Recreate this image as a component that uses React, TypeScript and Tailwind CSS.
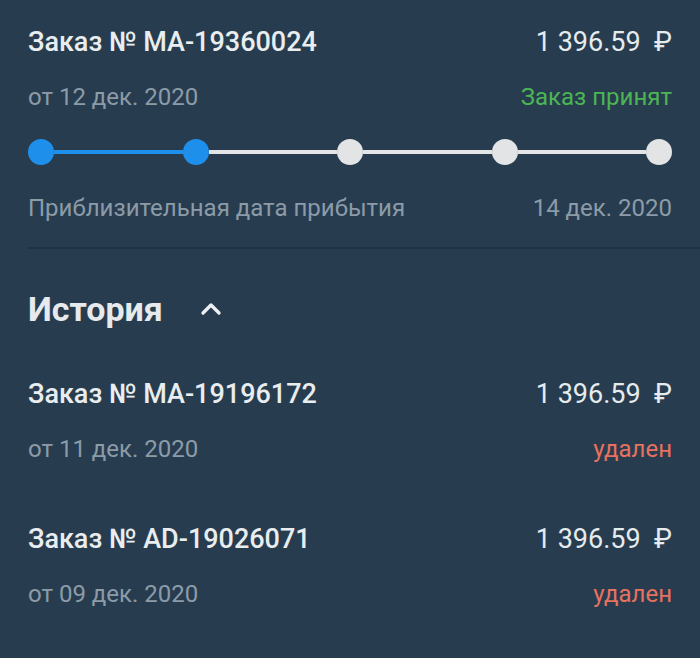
import { ChevronUp } from "lucide-react";

const steps = [true, true, false, false, false];

function Order({
  num,
  date,
  status,
  statusClass,
}: {
  num: string;
  date: string;
  status: string;
  statusClass: string;
}) {
  return (
    <div className="flex flex-col gap-[23px]">
      <div className="flex items-center justify-between h-8">
        <span className="text-[27px] font-medium text-[#e9edf0]">Заказ № {num}</span>
        <span className="text-[27px] text-[#e6ebee]">1 396.59&nbsp; ₽</span>
      </div>
      <div className="flex items-center justify-between h-8">
        <span className="text-[24px] text-[#8c9ba8]">{date}</span>
        <span className={`text-[24px] ${statusClass}`}>{status}</span>
      </div>
    </div>
  );
}

export default function App() {
  return (
    <div
      className="w-[700px] h-[658px] bg-[#273d4f] overflow-hidden"
      style={{ fontFamily: "Roboto, 'Noto Sans', sans-serif" }}
    >
      {/* Current order */}
      <div className="px-7 pt-[26px]">
        <Order
          num="MA-19360024"
          date="от 12 дек. 2020"
          status="Заказ принят"
          statusClass="text-[#4cb553]"
        />

        {/* Progress */}
        <div className="flex items-center mt-[26px] h-[26px]">
          {steps.map((done, i) => (
            <div key={i} className={`flex items-center ${i > 0 ? "flex-1" : ""}`}>
              {i > 0 && (
                <div
                  className={`flex-1 h-1 ${done ? "bg-[#1f8fec]" : "bg-[#e2e4e6]"}`}
                />
              )}
              <div
                className={`w-[26px] h-[26px] rounded-full shrink-0 ${
                  done ? "bg-[#1f8fec]" : "bg-[#e2e4e6]"
                }`}
              />
            </div>
          ))}
        </div>

        <div className="flex items-center justify-between h-8 mt-[27px]">
          <span className="text-[24px] text-[#8c9ba8]">Приблизительная дата прибытия</span>
          <span className="text-[24px] text-[#8c9ba8]">14 дек. 2020</span>
        </div>
      </div>

      {/* Divider */}
      <div className="ml-7 mt-[23px] h-[2px] bg-[#1f3343]" />

      {/* History */}
      <div className="px-7">
        <div className="flex items-center gap-8 h-10 mt-10">
          <span className="text-[34px] font-bold text-[#e6eaed]">История</span>
          <ChevronUp className="w-8 h-8 text-[#eef1f3]" strokeWidth={2.5} />
        </div>

        <div className="mt-[49px] flex flex-col gap-[58px]">
          <Order
            num="MA-19196172"
            date="от 11 дек. 2020"
            status="удален"
            statusClass="text-[#e8715f]"
          />
          <Order
            num="AD-19026071"
            date="от 09 дек. 2020"
            status="удален"
            statusClass="text-[#e8715f]"
          />
        </div>
      </div>
    </div>
  );
}
